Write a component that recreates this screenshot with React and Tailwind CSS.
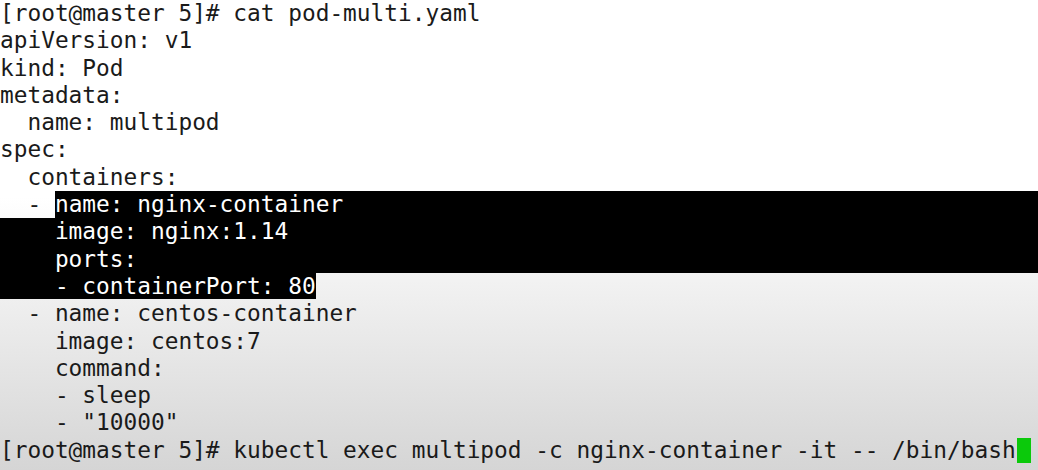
export default function App() {
  const plain = line => (
    <div className="whitespace-pre">{line}</div>
  );

  return (
    <div className="h-[470px] w-[1038px] overflow-hidden bg-[linear-gradient(180deg,#ffffff_0%,#ffffff_42%,#eeeeee_65%,#d5d5d5_100%)] text-[#1a1a1a] text-[22.8px] leading-[27.3px] font-['DejaVu_Sans_Mono',monospace]">
      {plain('[root@master 5]# cat pod-multi.yaml')}
      {plain('apiVersion: v1')}
      {plain('kind: Pod')}
      {plain('metadata:')}
      {plain('  name: multipod')}
      {plain('spec:')}
      {plain('  containers:')}
      <div className="flex whitespace-pre">
        <span>{'  - '}</span>
        <span className="flex-1 bg-black text-white">name: nginx-container</span>
      </div>
      <div className="whitespace-pre bg-black text-white">{'    image: nginx:1.14'}</div>
      <div className="whitespace-pre bg-black text-white">{'    ports:'}</div>
      <div className="whitespace-pre">
        <span className="bg-black text-white">{'    - containerPort: 80'}</span>
      </div>
      {plain('  - name: centos-container')}
      {plain('    image: centos:7')}
      {plain('    command:')}
      {plain('    - sleep')}
      {plain('    - "10000"')}
      <div className="flex items-center whitespace-pre">
        <span>[root@master 5]# kubectl exec multipod -c nginx-container -it -- /bin/bash</span>
        <span className="ml-[1px] h-[25px] w-[14px] bg-[#0bc90b]" />
      </div>
    </div>
  );
}
